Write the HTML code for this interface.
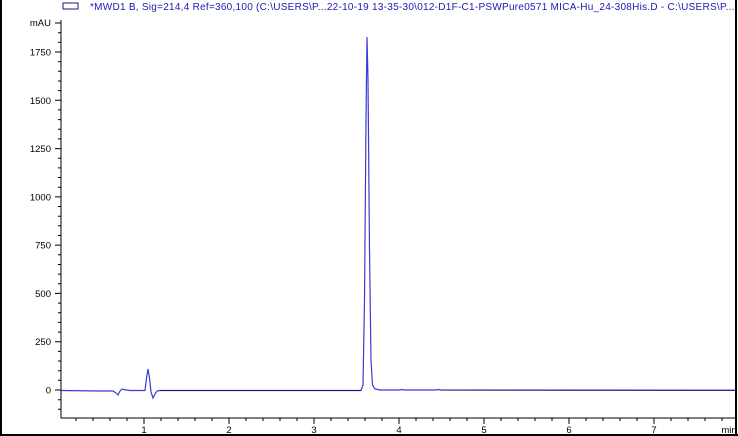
<!DOCTYPE html>
<html><head><meta charset="utf-8"><style>
html,body{margin:0;padding:0;background:#fff;}
svg{display:block;font-family:"Liberation Sans",Arial,sans-serif;}
</style></head><body>
<svg width="738" height="436" viewBox="0 0 738 436" xmlns="http://www.w3.org/2000/svg">
<rect x="0" y="0" width="738" height="436" fill="#fff"/>
<text x="90" y="10" font-size="10" fill="#1a1ab0" textLength="660" lengthAdjust="spacing">*MWD1 B, Sig=214,4 Ref=360,100 (C:\USERS\P...22-10-19 13-35-30\012-D1F-C1-PSWPure0571 MICA-Hu_24-308His.D - C:\USERS\P...OC</text>
<rect x="736" y="0" width="2" height="436" fill="#fff"/>
<!-- frame -->
<path d="M1,0 V435 H736 V0" fill="none" stroke="#000" stroke-width="2"/>
<!-- legend -->
<rect x="63" y="3" width="15" height="6" fill="none" stroke="#1a1a7a" stroke-width="1"/>
<!-- axes -->
<path d="M61,20 V418 H736" fill="none" stroke="#000" stroke-width="1"/>
<g stroke="#000" stroke-width="1">
<path d="M58,409.3H61M58,399.7H61M55,390H61M58,380.3H61M58,370.7H61M58,361H61M58,351.4H61M55,341.7H61M58,332.1H61M58,322.4H61M58,312.7H61M58,303.1H61M55,293.4H61M58,283.8H61M58,274.1H61M58,264.5H61M58,254.8H61M55,245.1H61M58,235.5H61M58,225.8H61M58,216.2H61M58,206.5H61M55,196.9H61M58,187.2H61M58,177.5H61M58,167.9H61M58,158.2H61M55,148.6H61M58,138.9H61M58,129.3H61M58,119.6H61M58,109.9H61M55,100.3H61M58,90.6H61M58,81H61M58,71.3H61M58,61.7H61M55,52H61M58,42.3H61M58,32.7H61M55,23H61"/>
<path d="M76,418V421M93,418V421M110,418V421M127,418V421M144,418V424M161,418V421M178,418V421M195,418V421M212,418V421M229,418V424M246,418V421M263,418V421M280,418V421M297,418V421M314,418V424M331,418V421M348,418V421M365,418V421M382,418V421M399,418V424M416,418V421M433,418V421M450,418V421M467,418V421M484,418V424M501,418V421M518,418V421M535,418V421M552,418V421M569,418V424M586,418V421M603,418V421M620,418V421M637,418V421M654,418V424M671,418V421M688,418V421M705,418V421M722,418V421"/>
</g>
<g font-size="9.5" fill="#000" text-anchor="end">
<text x="51" y="26">mAU</text>
<text x="51" y="55.5">1750</text>
<text x="51" y="104">1500</text>
<text x="51" y="152">1250</text>
<text x="51" y="200.5">1000</text>
<text x="51" y="248.5">750</text>
<text x="51" y="297">500</text>
<text x="51" y="345">250</text>
<text x="51" y="393.5">0</text>
</g>
<g font-size="9.5" fill="#000" text-anchor="middle">
<text x="144" y="433">1</text>
<text x="229" y="433">2</text>
<text x="314" y="433">3</text>
<text x="399" y="433">4</text>
<text x="484" y="433">5</text>
<text x="569" y="433">6</text>
<text x="654" y="433">7</text>
<text x="729" y="433">min</text>
</g>
<rect x="735" y="418" width="3" height="18" fill="#fff"/>
<path d="M736,0 V436" stroke="#000" stroke-width="2"/>
<path d="M0,435 H738" stroke="#000" stroke-width="2"/>
<!-- trace -->
<path d="M61,390.5 L100,391 L113,391 L116,393 L118,395 L120,391 L122,389 L126,390 L130,390.5 L145,390.5 L146.5,378 L148,369 L149.5,378 L151,392 L153,398 L155,394 L157,391 L160,390.5 L361,390.5 L363,385 L364.5,300 L366,120 L367,37 L368,80 L369.5,250 L371,360 L372.5,385 L375,389 L380,390 L400,390 L402,389.5 L405,390 L436,390 L438,389.5 L441,390 L735,390.3" fill="none" stroke="#3a3ad8" stroke-width="1.2"/>
<path d="M160,390.5 L361,390.5 M441,390 L735,390.3" fill="none" stroke="#1a1a6a" stroke-width="1"/>
</svg>
</body></html>
